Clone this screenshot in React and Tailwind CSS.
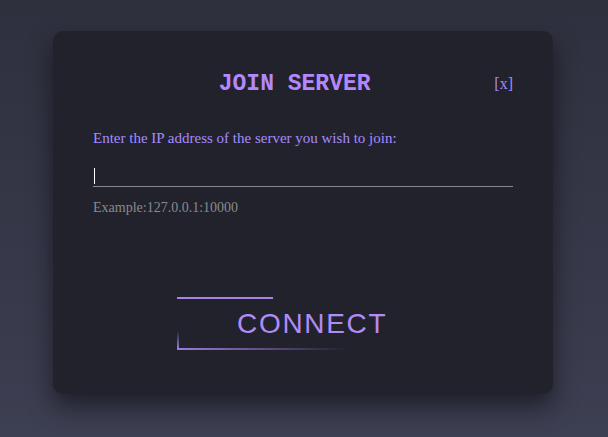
import React from 'react';

export default function App() {
  return (
    <div className="min-h-screen w-full bg-gradient-to-b from-[#2e303e] to-[#3d3f52] pt-[31px]">
      <div className="ml-[53px] h-[363px] w-[500px] rounded-[10px] bg-[#22222d] px-[40px] pt-[39px] shadow-[0_12px_24px_rgba(0,0,0,0.5)]">
        <div className="flex items-center">
          <h1 className="flex-1 pl-[2px] text-center font-['Liberation_Mono',monospace] text-[23px] font-bold leading-[28px] text-[#b388ff]">
            JOIN SERVER
          </h1>
          <button className="font-['Liberation_Serif',serif] text-[16px] leading-[20px] text-[#a08cf5]">[x]</button>
        </div>

        <p className="mt-[30px] font-['Liberation_Serif',serif] text-[15px] leading-[20px] text-[#a68cff]">
          Enter the IP address of the server you wish to join:
        </p>

        <div className="relative mt-[12px] h-[27px] border-b border-[#8a8a8a]">
          <input
            type="text"
            className="h-full w-full bg-transparent font-['Liberation_Serif',serif] text-[15px] text-white caret-transparent outline-none"
          />
          <span className="absolute left-[1px] top-[8px] h-[16px] w-px bg-white" />
        </div>

        <p className="mt-[12px] font-['Liberation_Serif',serif] text-[14px] leading-[18px] text-[#8a8a8a]">
          Example:127.0.0.1:10000
        </p>

        <button className="relative ml-[84px] mt-[80px] flex h-[53px] items-center pl-[60px] pr-[16px] font-['Liberation_Sans',sans-serif] text-[28px] leading-none tracking-[1.7px] text-[#b08cf5]">
          <span className="absolute left-0 top-0 h-[2px] w-[96px] bg-[#a783e6]" />
          <span className="absolute bottom-[1px] left-0 h-[18px] w-[2px] bg-gradient-to-t from-[#9d7ddc] to-transparent" />
          <span className="absolute bottom-0 left-0 h-[2px] w-[170px] bg-gradient-to-r from-[#9d7ddc] to-transparent" />
          CONNECT
        </button>
      </div>
    </div>
  );
}
